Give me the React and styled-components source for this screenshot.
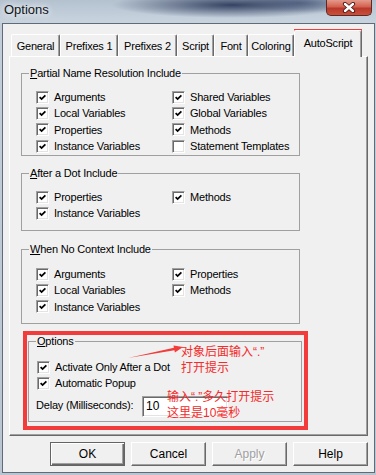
import styled, { createGlobalStyle } from "styled-components";

const GlobalStyle = createGlobalStyle`
  html, body { margin: 0; padding: 0; background: #fff; }
  body {
    font-family: "Liberation Sans", Arial, sans-serif;
    font-size: 11px;
    letter-spacing: -0.2px;
    color: #000;
  }
`;

const Window = styled.div`
  position: relative;
  width: 376px;
  height: 475px;
  box-sizing: border-box;
  display: flex;
  flex-direction: column;
  padding: 0 1px 2px 2px;
  background: linear-gradient(180deg, #c2ceda 0%, #b9c5d1 100%);
  overflow: hidden;
`;

const TitleBar = styled.div`
  height: 23px;
  flex: none;
  display: flex;
  align-items: flex-start;
  margin: 0 -1px 0 -2px;
  padding-left: 4px;
  background:
    radial-gradient(ellipse 120px 13px at 232px 5px, rgba(38, 52, 86, 0.9), rgba(38, 52, 86, 0) 100%),
    radial-gradient(ellipse 60px 10px at 300px 3px, rgba(60, 80, 120, 0.6), rgba(60, 80, 120, 0) 100%),
    linear-gradient(180deg, #b4c1cf 0%, #c3cfdb 70%, #c8d3de 100%);
`;

const TitleText = styled.span`
  font-size: 13px;
  letter-spacing: 0;
  line-height: 20px;
  color: #101418;
  text-shadow: 0 0 6px rgba(255, 255, 255, 0.95), 0 0 10px rgba(255, 255, 255, 0.8);
`;

const CloseButton = styled.div`
  margin-left: auto;
  margin-right: 4px;
  width: 46px;
  height: 16px;
  box-sizing: border-box;
  border: 1px solid #5b2a24;
  border-top: none;
  border-radius: 0 0 5px 5px;
  background: linear-gradient(180deg, #e49a8c 0%, #d4604f 45%, #b8382a 55%, #c9503c 100%);
  display: flex;
  align-items: center;
  justify-content: center;
`;

const Client = styled.div`
  flex: 1;
  display: flex;
  flex-direction: column;
  background: #f0f0f0;
  border: 1px solid #5f6b78;
  padding: 6px 6px 6px 6px;
  min-height: 0;
`;

const TabStrip = styled.div`
  height: 26px;
  display: flex;
  align-items: flex-end;
  padding-left: 2px;
  position: relative;
  z-index: 1;
`;

const Tab = styled.div`
  width: ${(p) => p.$w}px;
  height: ${(p) => (p.$active ? 27 : 22)}px;
  margin-bottom: ${(p) => (p.$active ? -1 : 0)}px;
  box-sizing: border-box;
  display: flex;
  align-items: center;
  justify-content: center;
  padding-bottom: ${(p) => (p.$active ? 2 : 0)}px;
  background: #f0f0f0;
  border-top: 1px solid #fff;
  border-left: 1px solid #fff;
  border-right: 1px solid #696969;
  border-radius: 2px 2px 0 0;
  box-shadow: inset -1px 0 #a0a0a0;
  white-space: nowrap;
`;

const Panel = styled.div`
  height: 380px;
  box-sizing: border-box;
  border-top: 1px solid #fff;
  border-left: 1px solid #fff;
  border-right: 1px solid #696969;
  border-bottom: 1px solid #696969;
  box-shadow: inset -1px -1px #a0a0a0;
  padding: 10px 0 0 11px;
  display: flex;
  flex-direction: column;
`;

const Group = styled.fieldset`
  margin: ${(p) => p.$mt || 0}px 0 0 ${(p) => p.$ml || 0}px;
  padding: 0;
  width: ${(p) => p.$w}px;
  height: ${(p) => p.$h}px;
  box-sizing: border-box;
  border: 1px solid #a0a0a0;
  min-inline-size: 0;
`;

const Legend = styled.legend`
  margin-left: 7px;
  padding: 0 1px;
  line-height: 13px;
  height: 13px;
`;

const CheckGrid = styled.div`
  display: grid;
  grid-template-columns: 136px 1fr;
  grid-auto-rows: 16.33px;
  align-items: center;
  padding: ${(p) => p.$pt}px 0 0 ${(p) => p.$pl ?? 14}px;
`;

const CheckItem = styled.label`
  display: flex;
  align-items: center;
  gap: 5px;
  white-space: nowrap;
`;

const Box = styled.span`
  flex: none;
  width: 13px;
  height: 13px;
  box-sizing: border-box;
  border: 1px solid;
  border-color: #a0a0a0 #fff #fff #a0a0a0;
  box-shadow: inset 1px 1px #696969, inset -1px -1px #e3e3e3;
  background: #fff;
  display: flex;
  align-items: center;
  justify-content: center;
`;

const DelayRow = styled.div`
  display: flex;
  align-items: flex-start;
  margin-top: 4px;
  padding-left: 7px;
`;

const DelayLabel = styled.span`
  width: 106px;
  padding-top: 3px;
  white-space: nowrap;
`;

const Field = styled.div`
  width: 86px;
  height: 21px;
  box-sizing: border-box;
  border: 1px solid;
  border-color: #a0a0a0 #fff #fff #a0a0a0;
  box-shadow: inset 1px 1px #696969, inset -1px -1px #e3e3e3;
  background: #fff;
  font-size: 12px;
  letter-spacing: 0;
  line-height: 19px;
  padding-left: 3px;
`;

const ButtonRow = styled.div`
  display: flex;
  justify-content: flex-end;
  gap: 6px;
  margin-top: 6px;
`;

const Button = styled.div`
  width: 75px;
  height: 24px;
  box-sizing: border-box;
  display: flex;
  align-items: center;
  justify-content: center;
  font-size: 12px;
  letter-spacing: 0;
  background: #f0f0f0;
  border: 1px solid;
  border-color: ${(p) => (p.$default ? "#646464" : "#fff #696969 #696969 #fff")};
  box-shadow: ${(p) =>
    p.$default
      ? "inset 1px 1px #fff, inset -1px -1px #696969, inset -2px -2px #a0a0a0"
      : "inset -1px -1px #a0a0a0"};
  color: ${(p) => (p.$disabled ? "#a0a0a0" : "#000")};
  text-shadow: ${(p) => (p.$disabled ? "1px 1px #fff" : "none")};
`;

const MarkBox = styled.div`
  position: absolute;
  left: ${(p) => p.$x}px;
  top: ${(p) => p.$y}px;
  width: ${(p) => p.$w}px;
  height: ${(p) => p.$h}px;
  box-sizing: border-box;
  border: ${(p) => p.$t}px solid #f23b3b;
  pointer-events: none;
`;

const Note = styled.div`
  position: absolute;
  left: ${(p) => p.$x}px;
  top: ${(p) => p.$y}px;
  font-family: "Liberation Sans", "Noto Sans CJK SC", sans-serif;
  font-size: 12px;
  letter-spacing: 0;
  line-height: 16px;
  color: #f52a2a;
  white-space: nowrap;
`;

const Overlay = styled.svg`
  position: absolute;
  left: 0;
  top: 0;
  pointer-events: none;
`;

const TABS = [
  { label: "General", w: 49 },
  { label: "Prefixes 1", w: 58 },
  { label: "Prefixes 2", w: 59 },
  { label: "Script", w: 37 },
  { label: "Font", w: 34 },
  { label: "Coloring", w: 46 },
  { label: "AutoScript", w: 68, active: true },
];

const PARTIAL = [
  ["Arguments", true],
  ["Shared Variables", true],
  ["Local Variables", true],
  ["Global Variables", true],
  ["Properties", true],
  ["Methods", true],
  ["Instance Variables", true],
  ["Statement Templates", false],
];

const AFTER_DOT = [
  ["Properties", true],
  ["Methods", true],
  ["Instance Variables", true],
];

const NO_CONTEXT = [
  ["Arguments", true],
  ["Properties", true],
  ["Local Variables", true],
  ["Methods", true],
  ["Instance Variables", true],
];

const Check = ({ label, checked }) => (
  <CheckItem>
    <Box>
      {checked && (
        <svg width="7" height="7" viewBox="0 0 7 7">
          <path d="M0.6 3.1 L2.6 5.1 L6.4 1.3" fill="none" stroke="#000" strokeWidth="1.8" />
        </svg>
      )}
    </Box>
    {label}
  </CheckItem>
);

const Checks = ({ items, pt }) => (
  <CheckGrid $pt={pt}>
    {items.map(([label, checked], i) => (
      <Check key={i} label={label} checked={checked} />
    ))}
  </CheckGrid>
);

export default function App() {
  return (
    <>
      <GlobalStyle />
      <Window>
        <TitleBar>
          <TitleText>Options</TitleText>
          <CloseButton>
            <svg width="14" height="11" viewBox="0 0 14 11">
              <path d="M3 2 L11 9 M11 2 L3 9" stroke="#4a1a14" strokeWidth="4.2" strokeLinecap="round" />
              <path d="M3 2 L11 9 M11 2 L3 9" stroke="#fff" strokeWidth="2.4" strokeLinecap="round" />
            </svg>
          </CloseButton>
        </TitleBar>

        <Client>
          <TabStrip>
            {TABS.map((t) => (
              <Tab key={t.label} $w={t.w} $active={t.active}>
                {t.label}
              </Tab>
            ))}
          </TabStrip>

          <Panel>
            <Group $w={279} $h={89}>
              <Legend><u>P</u>artial Name Resolution Include</Legend>
              <Checks items={PARTIAL} pt={9} />
            </Group>

            <Group $w={279} $h={64} $mt={11}>
              <Legend><u>A</u>fter a Dot Include</Legend>
              <Checks items={AFTER_DOT} pt={9} />
            </Group>

            <Group $w={279} $h={81} $mt={12}>
              <Legend><u>W</u>hen No Context Include</Legend>
              <Checks items={NO_CONTEXT} pt={10} />
            </Group>

            <Group $w={274} $h={87} $mt={11} $ml={7}>
              <Legend><u>O</u>ptions</Legend>
              <CheckGrid $pt={11} $pl={8}>
                <Check label="Activate Only After a Dot" checked />
                <span />
                <Check label="Automatic Popup" checked />
              </CheckGrid>
              <DelayRow>
                <DelayLabel>Delay (Milliseconds):</DelayLabel>
                <Field>10</Field>
              </DelayRow>
            </Group>
          </Panel>

          <ButtonRow>
            <Button $default>OK</Button>
            <Button>Cancel</Button>
            <Button $disabled>Apply</Button>
            <Button>Help</Button>
          </ButtonRow>
        </Client>

        <MarkBox $x={294} $y={29} $w={68} $h={28} $t={3} />
        <MarkBox $x={23} $y={331} $w={285} $h={99} $t={4} />

        <Overlay width="376" height="475" viewBox="0 0 376 475">
          <polygon
            points="128,358 174.4,350.3 174.9,352.4 183,347 173.5,345.4 173.9,347.7"
            fill="#f23b3b"
          />
        </Overlay>

        <Note $x={181} $y={344}>
          对象后面输入“.”<br />
          打开提示
        </Note>
        <Note $x={167} $y={389}>
          输入“.”多久打开提示<br />
          这里是10毫秒
        </Note>
      </Window>
    </>
  );
}
